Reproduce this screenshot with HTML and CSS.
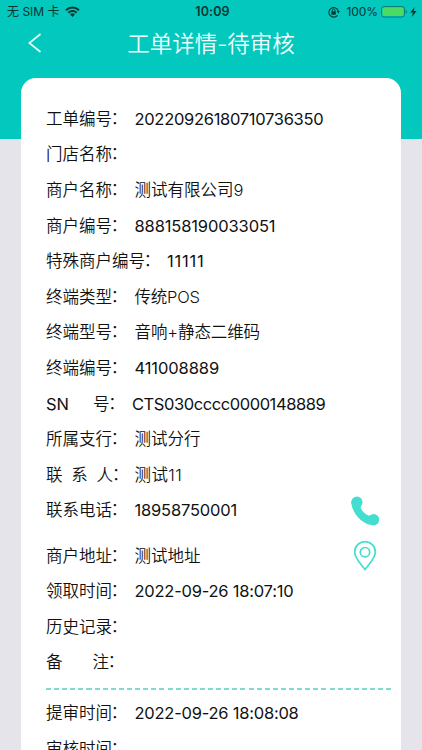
FILE: index.html
```html
<!DOCTYPE html>
<html lang="zh-CN">
<head>
<meta charset="utf-8">
<title>工单详情</title>
<link rel="stylesheet" href="styles.css">
</head>
<body>
<div class="screen">
  <header class="header">
    <div class="status">
      <div class="carrier"><span>无 SIM 卡</span>
        <svg class="wifi" width="15" height="11" viewBox="0 0 15 11"><path d="M.3 3.500a10.300 10.300 0 0 1 14.400 0l-1.400 1.500a8.200 8.200 0 0 0-11.600 0zM2.700 6a6.800 6.800 0 0 1 9.600 0l-1.400 1.500a4.800 4.800 0 0 0-6.800 0zM5.100 8.500a3.400 3.400 0 0 1 4.800 0L7.500 11z"/></svg>
      </div>
      <div class="clock">10:09</div>
      <div class="power">
        <svg class="lock" width="12" height="12" viewBox="0 0 12 12"><path d="M9.500 9.300A4.800 4.800 0 1 1 10.300 5" fill="none" stroke="#073633" stroke-width="1.100"/><path d="M8.700 5h3.200l-1.600 2.400z"/><rect x="3.400" y="5.300" width="4.400" height="3.400" rx=".5"/><path d="M4.300 5.500V4.200a1.300 1.300 0 0 1 2.600 0v1.300" fill="none" stroke="#073633" stroke-width=".9"/></svg>
        <span class="percent">100%</span>
        <svg width="26" height="12" viewBox="0 0 26 12"><rect x=".5" y=".5" width="23" height="10.600" rx="2.600" fill="none" stroke="#087f79"/><rect x="1.500" y="1.500" width="21" height="8.600" rx="1.600" fill="#4cd964"/><path d="M24.700 4v3.800c1-.4 1.200-1.100 1.200-1.900S25.700 4.400 24.700 4z" fill="#087f79"/></svg>
        <svg class="bolt" width="7" height="10" viewBox="0 0 7 10"><path d="M4.600 0L.3 5.600h2.500L2 10l4.600-6H3.800z"/></svg>
      </div>
    </div>
    <div class="nav">
      <svg class="back" width="14" height="20" viewBox="0 0 14 20"><path d="M12.500 1L1.300 10l11.200 9" fill="none" stroke="#e4fffb" stroke-width="1.700"/></svg>
      <h1>工单详情-待审核</h1>
    </div>
  </header>
  <main class="card">
    <section class="group">
      <div class="row"><span class="label">工单编号<span class="colon">：</span></span><span class="value order">20220926180710736350</span></div>
      <div class="row"><span class="label">门店名称<span class="colon">：</span></span></div>
      <div class="row"><span class="label">商户名称<span class="colon">：</span></span><span class="value text">测试有限公司9</span></div>
      <div class="row"><span class="label">商户编号<span class="colon">：</span></span><span class="value merchant">888158190033051</span></div>
      <div class="row"><span class="label long">特殊商户编号<span class="colon">：</span></span><span class="value ones">11111</span></div>
      <div class="row"><span class="label">终端类型<span class="colon">：</span></span><span class="value text pos">传统POS</span></div>
      <div class="row"><span class="label">终端型号<span class="colon">：</span></span><span class="value text model">音响+静态二维码</span></div>
      <div class="row"><span class="label">终端编号<span class="colon">：</span></span><span class="value terminal">411008889</span></div>
      <div class="row"><span class="label serial"><span class="part">SN</span>号<span class="colon">：</span></span><span class="value sn">CTS030cccc0000148889</span></div>
      <div class="row"><span class="label">所属支行<span class="colon">：</span></span><span class="value text">测试分行</span></div>
      <div class="row"><span class="label contact"><span class="part">联</span><span class="part">系</span>人<span class="colon">：</span></span><span class="value text person">测试11</span></div>
      <div class="row"><span class="label">联系电话<span class="colon">：</span></span><span class="value phone">18958750001</span>
        <svg class="action" width="30" height="30" viewBox="0 0 30 30" fill="#43decf"><circle cx="6.900" cy="6.200" r="5.600"/><circle cx="23.600" cy="23.700" r="5.600"/><path d="M1.300 5.500C1.400 16.500 12 29 23.500 29.300L20.300 19.200C18.200 21.500 8.700 12.700 10.900 10z"/></svg>
      </div>
    </section>
    <section class="group location">
      <div class="row"><span class="label">商户地址<span class="colon">：</span></span><span class="value text">测试地址</span>
        <svg class="action pin" width="24" height="30" viewBox="0 0 24 30"><path d="M12 28.500C9 24.200 1.700 17.500 1.700 11a10.300 10.300 0 0 1 20.600 0c0 6.500-7.300 13.200-10.300 17.500z"/><circle cx="12" cy="11.200" r="4.700"/></svg>
      </div>
      <div class="row"><span class="label">领取时间<span class="colon">：</span></span><span class="value time">2022-09-26 18:07:10</span></div>
      <div class="row"><span class="label">历史记录<span class="colon">：</span></span></div>
      <div class="row"><span class="label remark"><span class="part">备</span>注<span class="colon">：</span></span></div>
    </section>
    <div class="divider"></div>
    <section class="group">
      <div class="row"><span class="label">提审时间<span class="colon">：</span></span><span class="value time">2022-09-26 18:08:08</span></div>
      <div class="row"><span class="label">审核时间<span class="colon">：</span></span></div>
    </section>
  </main>
</div>
</body>
</html>
```
FILE: styles.css
```css
* { box-sizing: border-box; }
body { margin: 0; background: #e5e4eb; font-family: Inter, "Noto Sans CJK SC", sans-serif; color: #111; }
.screen { height: 750px; overflow: hidden; background: linear-gradient(#02c8be 139px, #e5e4eb 139px); }
.header { height: 78px; }
.status { height: 21px; display: grid; grid-template-columns: 1fr 40px 1fr; align-items: center; font-size: 12px; color: #073633; fill: #073633; }
.status svg { flex: none; display: block; }
.carrier { display: flex; align-items: center; padding-left: 7px; gap: 5px; line-height: 21px; white-space: nowrap; }
.clock { padding: 1px 0 0 3px; font-size: 12.5px; font-weight: 600; text-align: center; letter-spacing: .1px; line-height: 22px; }
.power { display: flex; align-items: center; justify-content: flex-end; padding-right: 5px; }
.percent { margin: 0 3px 0 7px; letter-spacing: -.1px; }
.bolt { margin-left: 3px; }
.nav { height: 45px; display: grid; grid-template-columns: 28px 1fr 28px; align-items: center; }
.back { margin: -1px 0 0 28px; }
h1 { margin: 0; color: #f0fffd; font-size: 22.5px; font-weight: 350; line-height: 44px; text-align: center; white-space: nowrap; }
.card { height: 700px; margin: 0 21px; padding: 23.9px 10px 0 25px; background: #fff; border-radius: 15px; }
.row { height: 35.6px; display: flex; align-items: center; font-size: 16.5px; font-weight: 350; line-height: 35.6px; white-space: nowrap; }
.label { width: 88.5px; flex: none; display: flex; }
.colon { margin: -1px 0 0 -1.2px; }
.long { width: 121px; }
.serial { width: 86px; }
.serial .part { width: 47px; font-weight: 400; }
.contact .part { width: 25.3px; }
.remark .part { width: 46.5px; }
.value { font-weight: 400; }
.text { font-weight: 350; }
.order { letter-spacing: -.3px; }
.merchant { letter-spacing: -.13px; }
.ones { letter-spacing: .8px; }
.pos { letter-spacing: -.2px; }
.model { letter-spacing: -.1px; }
.terminal { letter-spacing: -.1px; }
.sn { letter-spacing: -.43px; }
.person { letter-spacing: .4px; }
.phone { letter-spacing: -.18px; }
.time { letter-spacing: -.23px; }
.action { margin: -1px 11px 0 auto; flex: none; }
.pin { margin-right: 14px; fill: none; stroke: #43decf; stroke-width: 1.7; }
.location { margin-top: 9.7px; }
.divider { height: 2px; margin: 6.6px 0 6.3px; background: repeating-linear-gradient(90deg, #80dacd 0 5px, #fff 5px 8.1px); }
```
